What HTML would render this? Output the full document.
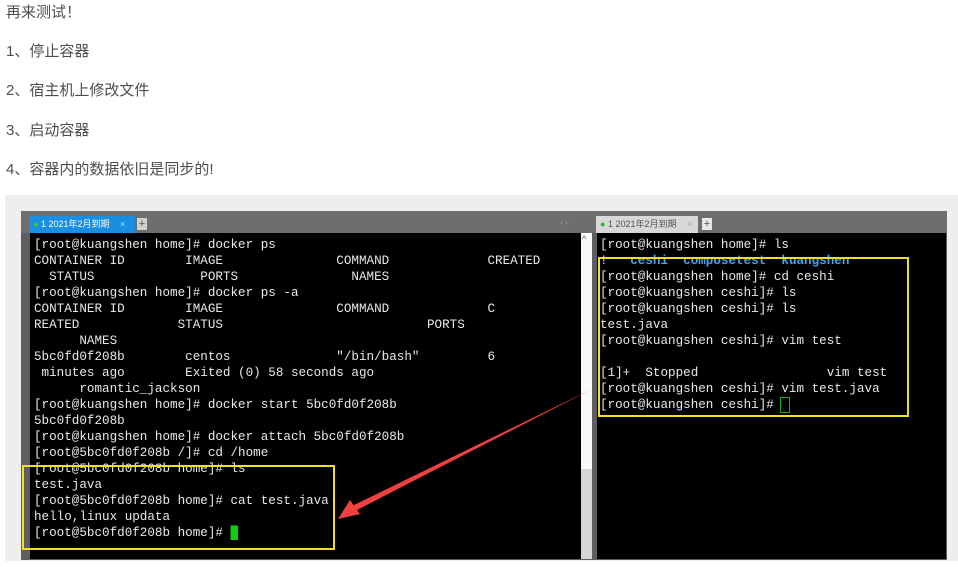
<!DOCTYPE html>
<html><head><meta charset="utf-8"><style>
body{margin:0;width:958px;height:567px;background:#fff;position:relative;overflow:hidden;font-family:"Liberation Sans","Noto Sans CJK SC",sans-serif}
.t{position:absolute;left:6px;font-size:15px;color:#4d4d4d;line-height:20px}
.abs{position:absolute}
pre{margin:0;position:absolute;font-family:"Liberation Mono","DejaVu Sans Mono",monospace;font-size:12.6px;line-height:16px;color:#e8e8e8}
</style></head><body>
<div class="t" style="top:3px">再来测试！</div>
<div class="t" style="top:42px">1、停止容器</div>
<div class="t" style="top:81px">2、宿主机上修改文件</div>
<div class="t" style="top:121px">3、启动容器</div>
<div class="t" style="top:160px">4、容器内的数据依旧是同步的!</div>

<div class="abs" style="left:5px;top:195px;width:953px;height:366px;background:#eeeef0"></div>
<div class="abs" style="left:21px;top:211px;width:926px;height:349px;background:#5e5e5e"></div>
<div class="abs" style="left:21px;top:211px;width:926px;height:22px;background:#6e6e6e"></div>
<div class="abs" style="left:29px;top:216px;width:106px;height:17px;background:#1a8ee0;color:#fff;font-size:9px;line-height:17px"><span style="color:#3c3;margin-left:4px">●</span> 1 2021年2月到期 <span style="color:#bfe0f8;margin-left:8px">×</span></div>
<div class="abs" style="left:137px;top:218px;width:10px;height:12px;background:#d0d0d0;color:#555;font-size:11px;line-height:12px;text-align:center">+</div>
<div class="abs" style="left:560px;top:218px;color:#999;font-size:8px">‹ › ·</div>
<div class="abs" style="left:596px;top:216px;width:102px;height:17px;background:#d8d8d8;color:#555;font-size:9px;line-height:17px"><span style="color:#2b2;margin-left:4px">●</span> 1 2021年2月到期 <span style="color:#aaa;margin-left:8px">×</span></div>
<div class="abs" style="left:702px;top:218px;width:10px;height:12px;background:#e8e8e8;color:#555;font-size:11px;line-height:12px;text-align:center">+</div>
<div class="abs" style="left:30px;top:233px;width:551px;height:326px;background:#000"></div>
<div class="abs" style="left:581px;top:233px;width:11px;height:236px;background:#fafafa"></div>
<div class="abs" style="left:581px;top:469px;width:11px;height:90px;background:#d6d6d6"></div>
<div class="abs" style="left:582px;top:234px;color:#555;font-size:9px">^</div>
<div class="abs" style="left:597px;top:233px;width:349px;height:326px;background:#000"></div>

<pre style="left:34px;top:237px">[root@kuangshen home]# docker ps
CONTAINER ID        IMAGE               COMMAND             CREATED
  STATUS              PORTS               NAMES
[root@kuangshen home]# docker ps -a
CONTAINER ID        IMAGE               COMMAND             C
REATED             STATUS                           PORTS
      NAMES
5bc0fd0f208b        centos              "/bin/bash"         6
 minutes ago        Exited (0) 58 seconds ago
      romantic_jackson
[root@kuangshen home]# docker start 5bc0fd0f208b
5bc0fd0f208b
[root@kuangshen home]# docker attach 5bc0fd0f208b
[root@5bc0fd0f208b /]# cd /home
[root@5bc0fd0f208b home]# ls
test.java
[root@5bc0fd0f208b home]# cat test.java
hello,linux updata
[root@5bc0fd0f208b home]# <span style="background:#1c1;color:#1c1">█</span></pre>

<pre style="left:600px;top:237px">[root@kuangshen home]# ls
!   <b style="color:#3ca8f0">ceshi  composetest  kuangshen</b>
[root@kuangshen home]# cd ceshi
[root@kuangshen ceshi]# ls
[root@kuangshen ceshi]# ls
test.java
[root@kuangshen ceshi]# vim test

[1]+  Stopped                 vim test
[root@kuangshen ceshi]# vim test.java
[root@kuangshen ceshi]# <span style="outline:1px solid #1a1;color:#000">_</span></pre>

<div class="abs" style="left:22px;top:465px;width:309px;height:81px;border:2px solid #f0e020"></div>
<div class="abs" style="left:598px;top:257px;width:307px;height:156px;border:2px solid #f0e020"></div>

<svg class="abs" style="left:0;top:0" width="958" height="567">
<polygon points="592,389 352,506 355,511" fill="#f04040"/>
<polygon points="338,519 350,500 360,514" fill="#f04040"/>
</svg>
</body></html>
